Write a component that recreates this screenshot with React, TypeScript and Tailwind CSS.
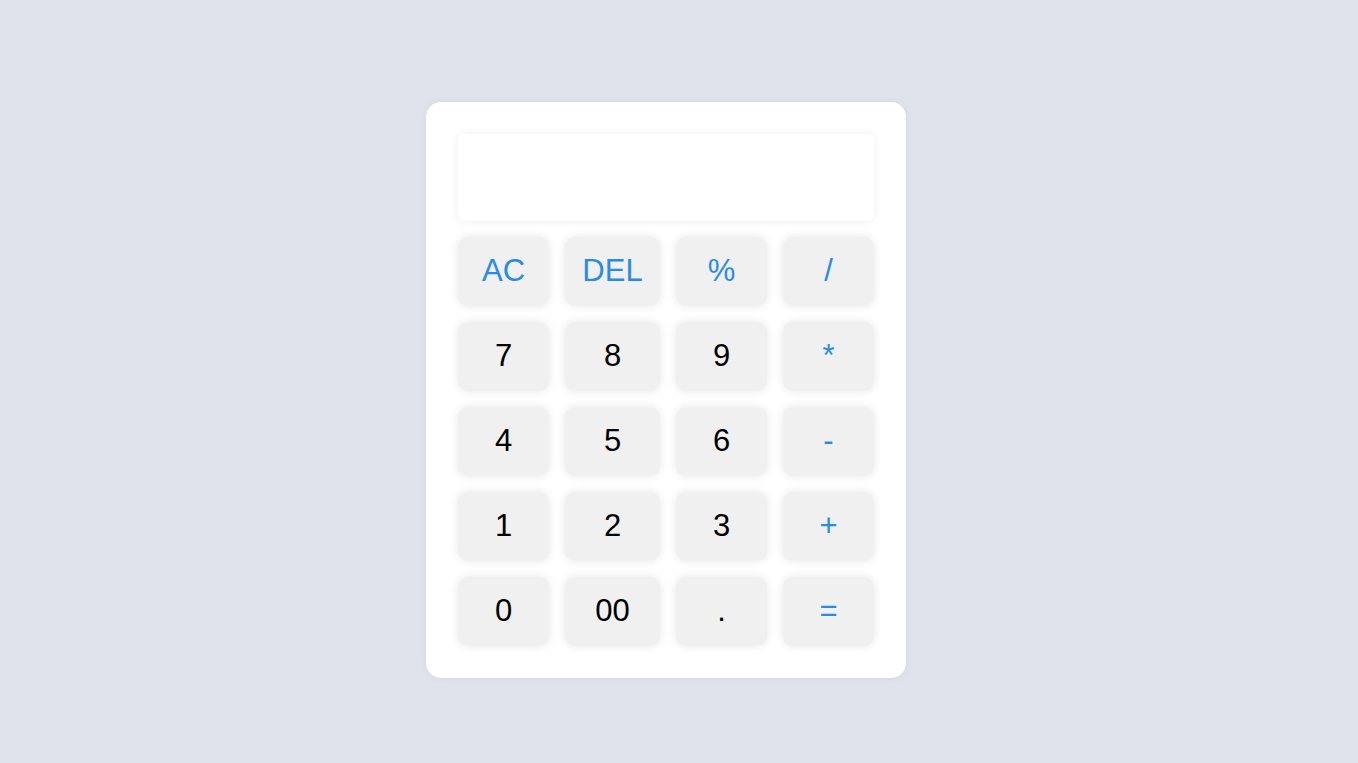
import { useState } from 'react';

const keys: { label: string; op?: boolean }[] = [
  { label: 'AC', op: true },
  { label: 'DEL', op: true },
  { label: '%', op: true },
  { label: '/', op: true },
  { label: '7' },
  { label: '8' },
  { label: '9' },
  { label: '*', op: true },
  { label: '4' },
  { label: '5' },
  { label: '6' },
  { label: '-', op: true },
  { label: '1' },
  { label: '2' },
  { label: '3' },
  { label: '+', op: true },
  { label: '0' },
  { label: '00' },
  { label: '.' },
  { label: '=', op: true },
];

export default function App() {
  const [value, setValue] = useState('');

  const press = (label: string) => {
    if (label === 'AC') return setValue('');
    if (label === 'DEL') return setValue((v) => v.slice(0, -1));
    if (label === '=') {
      try {
        // eslint-disable-next-line no-new-func
        const result = Function(`return (${value})`)();
        setValue(String(result));
      } catch {
        setValue('Error');
      }
      return;
    }
    setValue((v) => v + label);
  };

  return (
    <div
      className="min-h-screen bg-[#e0e2ec] flex items-center justify-center pr-[26px] pt-[17px]"
      style={{ fontFamily: '"Liberation Sans", Arial, sans-serif' }}
    >
      <div className="w-[480px] bg-white rounded-[15px] p-8 shadow-[0_0_10px_rgba(0,0,0,0.05)]">
        {/* Display */}
        <input
          value={value}
          readOnly
          className="w-full h-[87px] rounded-md bg-white px-4 text-right text-[40px] text-black outline-none shadow-[0_0_10px_rgba(0,0,0,0.07)]"
        />

        {/* Keys */}
        <div className="mt-4 grid grid-cols-[91px_95px_91px_91px] gap-x-4 gap-y-4">
          {keys.map((k) => (
            <button
              key={k.label}
              onClick={() => press(k.label)}
              className={`h-[69px] rounded-[10px] bg-[#f0f0f0] pb-[2px] text-[31px] leading-none shadow-[0_0_10px_rgba(0,0,0,0.1)] ${
                k.op ? 'text-[#2a8be6]' : 'text-black'
              }`}
            >
              {k.label}
            </button>
          ))}
        </div>
      </div>
    </div>
  );
}
